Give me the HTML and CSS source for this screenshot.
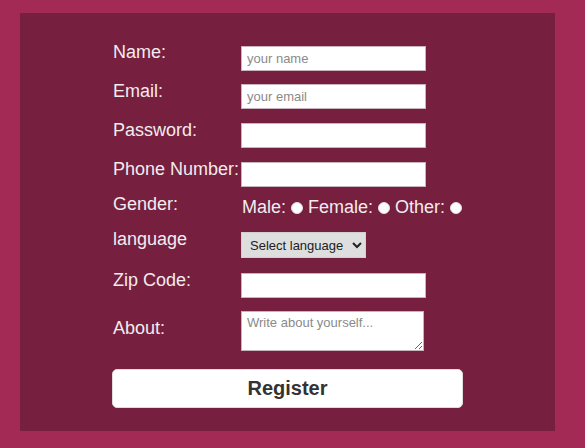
FILE: index.html
```html
<!DOCTYPE html>
<html lang="en">
<head>
<meta charset="utf-8">
<title>Register</title>
<link rel="stylesheet" href="styles.css">
</head>
<body>
<div class="panel">
  <form class="form">
    <div class="row r39 c4">
      <label class="lbl" for="name">Name:</label>
      <input class="field" id="name" type="text" placeholder="your name">
    </div>
    <div class="row r39 c3">
      <label class="lbl" for="email">Email:</label>
      <input class="field" id="email" type="email" placeholder="your email">
    </div>
    <div class="row r39 c3">
      <label class="lbl" for="pw">Password:</label>
      <input class="field" id="pw" type="password">
    </div>
    <div class="row r35 c3">
      <label class="lbl" for="phone">Phone Number:</label>
      <input class="field" id="phone" type="tel">
    </div>
    <div class="row r35 c3">
      <span class="lbl">Gender:</span>
      <div class="radios">Male: <input class="radio" type="radio" name="g"> Female: <input class="radio" type="radio" name="g"> Other: <input class="radio" type="radio" name="g"></div>
    </div>
    <div class="row r41 c3">
      <label class="lbl" for="lang">language</label>
      <select class="select" id="lang">
        <option>Select language</option>
        <option>English</option>
        <option>Hindi</option>
      </select>
    </div>
    <div class="row r41 c3">
      <label class="lbl" for="zip">Zip Code:</label>
      <input class="field" id="zip" type="text">
    </div>
    <div class="row r58 about">
      <label class="lbl" for="about">About:</label>
      <textarea class="area" id="about" placeholder="Write about yourself..."></textarea>
    </div>
    <button class="btn" type="button">Register</button>
  </form>
</div>
</body>
</html>
```
FILE: styles.css
```css
html, body {
  margin: 0;
  padding: 0;
}
body {
  background: #a32a54;
  padding: 13px 30px 17px 20px;
  font-family: "Liberation Sans", Arial, sans-serif;
}
.panel {
  background: #761f3f;
  padding: 29px 0 23px;
}
.form {
  width: 351px;
  margin: 0 auto;
  display: flex;
  flex-direction: column;
}
.row {
  display: flex;
  align-items: flex-start;
  padding-left: 1px;
}
.r39 { height: 39px; }
.r35 { height: 35px; }
.r41 { height: 41px; }
.r58 { height: 58px; }
.lbl {
  width: 128px;
  flex: none;
  font-size: 18px;
  line-height: 21px;
  color: #f2ecee;
}
.c4 > .field { margin-top: 4px; }
.c3 > .field,
.c3 > .select,
.c3 > .radios { margin-top: 3px; }
.about > .lbl { margin-top: 7px; }
.field {
  box-sizing: border-box;
  width: 185px;
  height: 25px;
  margin: 0;
  padding: 0 5px;
  border: 1px solid #c9b3bc;
  background: #fff;
  font-family: "Liberation Sans", Arial, sans-serif;
  font-size: 13px;
  outline: none;
}
.field::placeholder,
.area::placeholder {
  color: #8a8a8a;
}
.radios {
  font-size: 18px;
  line-height: 21px;
  color: #f2ecee;
  margin-left: 1px;
  white-space: nowrap;
}
.radio {
  appearance: none;
  -webkit-appearance: none;
  width: 12px;
  height: 12px;
  margin: 0;
  border-radius: 50%;
  background: #fff;
  border: 1px solid #e4dde0;
  box-sizing: border-box;
  vertical-align: -1px;
}
.select {
  box-sizing: border-box;
  width: 125px;
  height: 26px;
  margin: 0;
  padding: 0 4px;
  border: 1px solid #d0d0d0;
  border-radius: 0;
  background-color: #dedede;
  color: #222;
  font-family: "Liberation Sans", Arial, sans-serif;
  font-size: 13px;
}
.area {
  box-sizing: border-box;
  width: 183px;
  height: 40px;
  margin: 0;
  padding: 3px 5px;
  border: 1px solid #c9b3bc;
  background: #fff;
  font-family: "Liberation Sans", Arial, sans-serif;
  font-size: 13px;
  outline: none;
}
.btn {
  box-sizing: border-box;
  width: 351px;
  height: 39px;
  margin: 0;
  border: 1px solid #ddd;
  border-radius: 5px;
  background: #fff;
  color: #333;
  font-family: "Liberation Sans", Arial, sans-serif;
  font-size: 20px;
  font-weight: bold;
  cursor: pointer;
}
```
